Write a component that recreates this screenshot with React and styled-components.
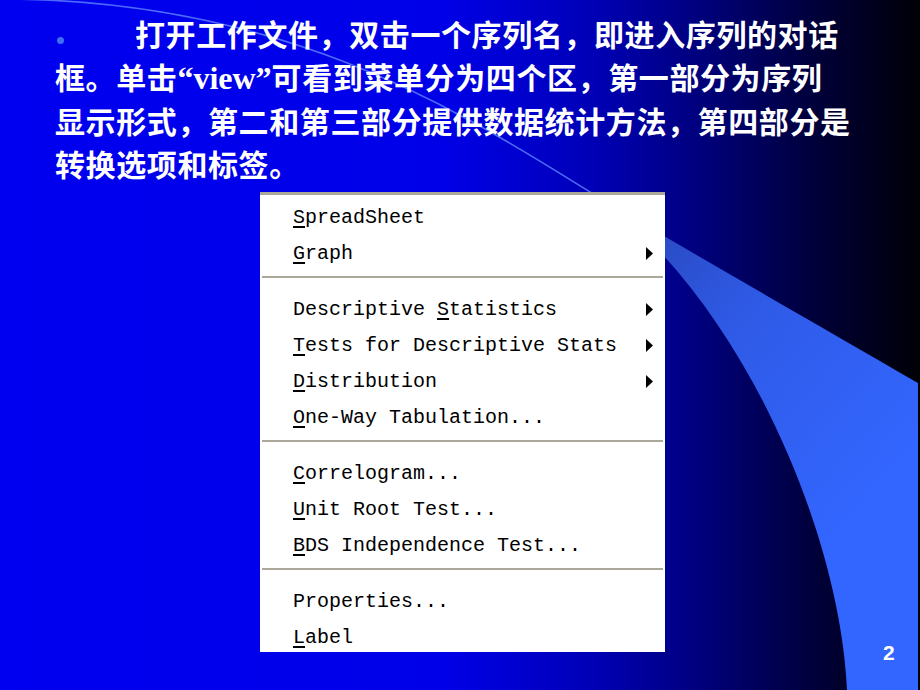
import React from "react";
import styled, { createGlobalStyle } from "styled-components";

const GlobalStyle = createGlobalStyle`
    html, body {
        margin: 0;
        padding: 0;
        background: #000;
    }
`;

const Slide = styled.div`
    position: relative;
    width: 920px;
    height: 690px;
    overflow: hidden;
    background: linear-gradient(
        to right,
        #0000f0 0%,
        #0000e8 48%,
        #0000b8 64%,
        #000078 77%,
        #000038 89%,
        #000006 100%
    );
`;

const Decor = styled.svg`
    position: absolute;
    inset: 0;
    width: 920px;
    height: 690px;
`;

const Content = styled.div`
    position: relative;
    padding-top: 12px;
`;

const Text = styled.div`
    padding-left: 55px;
    color: #fff;
    font-family: "Noto Sans CJK SC", "Noto Sans", sans-serif;
    font-weight: 700;
    font-size: 30px;
    letter-spacing: 0.6px;
`;

const Line = styled.div`
    height: 43.3px;
    line-height: 43.3px;
    white-space: nowrap;
`;

const Bullet = styled.span`
    display: inline-block;
    width: 7px;
    height: 7px;
    margin: 0 71px 0 2px;
    border-radius: 50%;
    background: #3f6ff2;
    vertical-align: 2px;
`;

const Latin = styled.span`
    font-family: "Liberation Serif", serif;
    font-size: 32px;
    letter-spacing: 0;
`;

const Menu = styled.div`
    box-sizing: border-box;
    width: 405px;
    height: 460px;
    margin: 6.8px 0 0 260px;
    padding-top: 5px;
    overflow: hidden;
    background: #fff;
    border-top: 3px solid #aca899;
`;

const Item = styled.div`
    display: flex;
    align-items: center;
    justify-content: space-between;
    height: 36px;
    padding: 0 12px 0 33px;
    font-family: "Liberation Mono", monospace;
    font-size: 20px;
    color: #000;
    white-space: pre;
`;

const Key = styled.span`
    text-decoration: underline;
    text-decoration-thickness: 2px;
    text-underline-offset: 3px;
`;

const Separator = styled.div`
    height: 2px;
    margin: 4px 2px 14px;
    background: #aca899;
`;

const PageNumber = styled.div`
    position: absolute;
    left: 883px;
    top: 642px;
    color: #fff;
    font-family: "Liberation Sans", Arial, sans-serif;
    font-weight: 700;
    font-size: 21px;
    line-height: 1;
`;

const sections = [
    [
        { label: "SpreadSheet", key: 0 },
        { label: "Graph", key: 0, sub: true },
    ],
    [
        { label: "Descriptive Statistics", key: 12, sub: true },
        { label: "Tests for Descriptive Stats", key: 0, sub: true },
        { label: "Distribution", key: 0, sub: true },
        { label: "One-Way Tabulation...", key: 0 },
    ],
    [
        { label: "Correlogram...", key: 0 },
        { label: "Unit Root Test...", key: 0 },
        { label: "BDS Independence Test...", key: 0 },
    ],
    [
        { label: "Properties...", key: null },
        { label: "Label", key: 0 },
    ],
];

const Arrow = () => (
    <svg width="7" height="13" viewBox="0 0 7 13">
        <polygon points="0,0 7,6.5 0,13" fill="#000" />
    </svg>
);

const MenuLabel = ({ label, k }) => {
    if (k === null) return <span>{label}</span>;
    return (
        <span>
            {label.slice(0, k)}
            <Key>{label[k]}</Key>
            {label.slice(k + 1)}
        </span>
    );
};

const App = () => {
    return (
        <>
            <GlobalStyle />
            <Slide>
                <Decor viewBox="0 0 920 690">
                    <defs>
                        <linearGradient
                            id="wedge"
                            gradientUnits="userSpaceOnUse"
                            x1="600"
                            y1="200"
                            x2="900"
                            y2="470"
                        >
                            <stop offset="0" stopColor="#2742b0" />
                            <stop offset="0.45" stopColor="#2f5ae6" />
                            <stop offset="1" stopColor="#3366ff" />
                        </linearGradient>
                    </defs>
                    <path
                        d="M0,-1 C300,-1 480,125 600,198"
                        fill="none"
                        stroke="#5a7dff"
                        strokeWidth="1.6"
                        opacity="0.85"
                    />
                    <path
                        d="M600,198 C700,258 820,326 918,383 L918,690 L847,690 C840,530 740,300 600,198 Z"
                        fill="url(#wedge)"
                    />
                </Decor>
                <Content>
                    <Text>
                        <Line>
                            <Bullet />
                            打开工作文件，双击一个序列名，即进入序列的对话
                        </Line>
                        <Line>
                            框。单击<Latin>“view”</Latin>可看到菜单分为四个区，第一部分为序列
                        </Line>
                        <Line>显示形式，第二和第三部分提供数据统计方法，第四部分是</Line>
                        <Line>转换选项和标签。</Line>
                    </Text>
                    <Menu>
                        {sections.map((items, i) => (
                            <React.Fragment key={i}>
                                {i > 0 && <Separator />}
                                {items.map((item) => (
                                    <Item key={item.label}>
                                        <MenuLabel label={item.label} k={item.key} />
                                        {item.sub && <Arrow />}
                                    </Item>
                                ))}
                            </React.Fragment>
                        ))}
                    </Menu>
                </Content>
                <PageNumber>2</PageNumber>
            </Slide>
        </>
    );
};

export default App;
